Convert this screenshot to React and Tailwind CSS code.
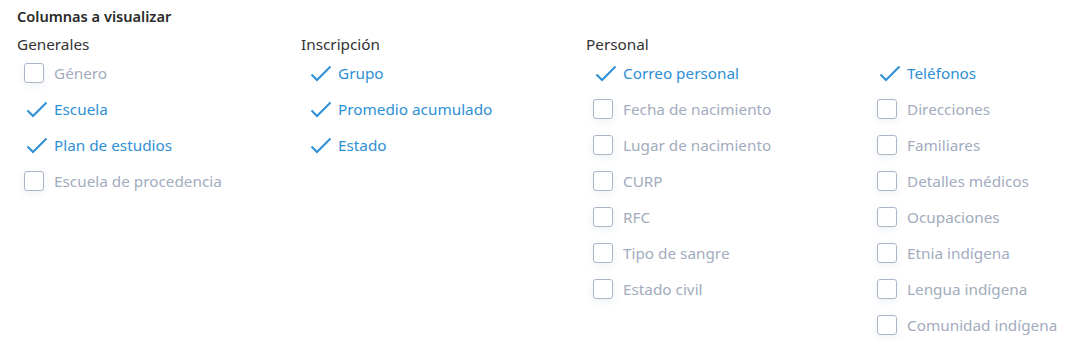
import React from "react";

const columns = [
  {
    title: "Generales",
    items: [
      { label: "Género", checked: false },
      { label: "Escuela", checked: true },
      { label: "Plan de estudios", checked: true },
      { label: "Escuela de procedencia", checked: false },
    ],
  },
  {
    title: "Inscripción",
    items: [
      { label: "Grupo", checked: true },
      { label: "Promedio acumulado", checked: true },
      { label: "Estado", checked: true },
    ],
  },
  {
    title: "Personal",
    items: [
      { label: "Correo personal", checked: true },
      { label: "Fecha de nacimiento", checked: false },
      { label: "Lugar de nacimiento", checked: false },
      { label: "CURP", checked: false },
      { label: "RFC", checked: false },
      { label: "Tipo de sangre", checked: false },
      { label: "Estado civil", checked: false },
    ],
  },
  {
    title: "",
    items: [
      { label: "Teléfonos", checked: true },
      { label: "Direcciones", checked: false },
      { label: "Familiares", checked: false },
      { label: "Detalles médicos", checked: false },
      { label: "Ocupaciones", checked: false },
      { label: "Etnia indígena", checked: false },
      { label: "Lengua indígena", checked: false },
      { label: "Comunidad indígena", checked: false },
    ],
  },
];

const Option = ({ label, checked }) => (
  <label className="flex items-center h-[36px] pl-[7px] cursor-pointer">
    {checked ? (
      <svg width="24" height="24" viewBox="0 0 24 24" className="-mr-[4px] mt-[1px]">
        <path d="M3.5 12.5 L9 18 L22.5 4.5" fill="none" stroke="#2e8fd6" strokeWidth="2" />
      </svg>
    ) : (
      <span className="w-[20px] h-[20px] rounded-[3px] border border-[#aab5c8] bg-white shadow-[0_2px_8px_rgba(40,70,130,0.08)]" />
    )}
    <span className={"ml-[10px] text-[15.3px] " + (checked ? "text-[#2e8fd6]" : "text-[#a2acbe]")}>
      {label}
    </span>
  </label>
);

export default function App() {
  return (
    <div className="bg-white min-h-screen pl-[17px] pt-[6px] font-['Noto_Sans',sans-serif]">
      <h2 className="text-[14.6px] leading-[20px] font-semibold text-[#2a2a2a]">Columnas a visualizar</h2>
      <div className="grid grid-cols-[284px_285px_284px_1fr] mt-[8px]">
        {columns.map((col, i) => (
          <div key={i}>
            <div className="h-[20px] leading-[20px] text-[15.3px] text-[#333] mb-[1px]">{col.title}</div>
            {col.items.map((it) => (
              <Option key={it.label} {...it} />
            ))}
          </div>
        ))}
      </div>
    </div>
  );
}
